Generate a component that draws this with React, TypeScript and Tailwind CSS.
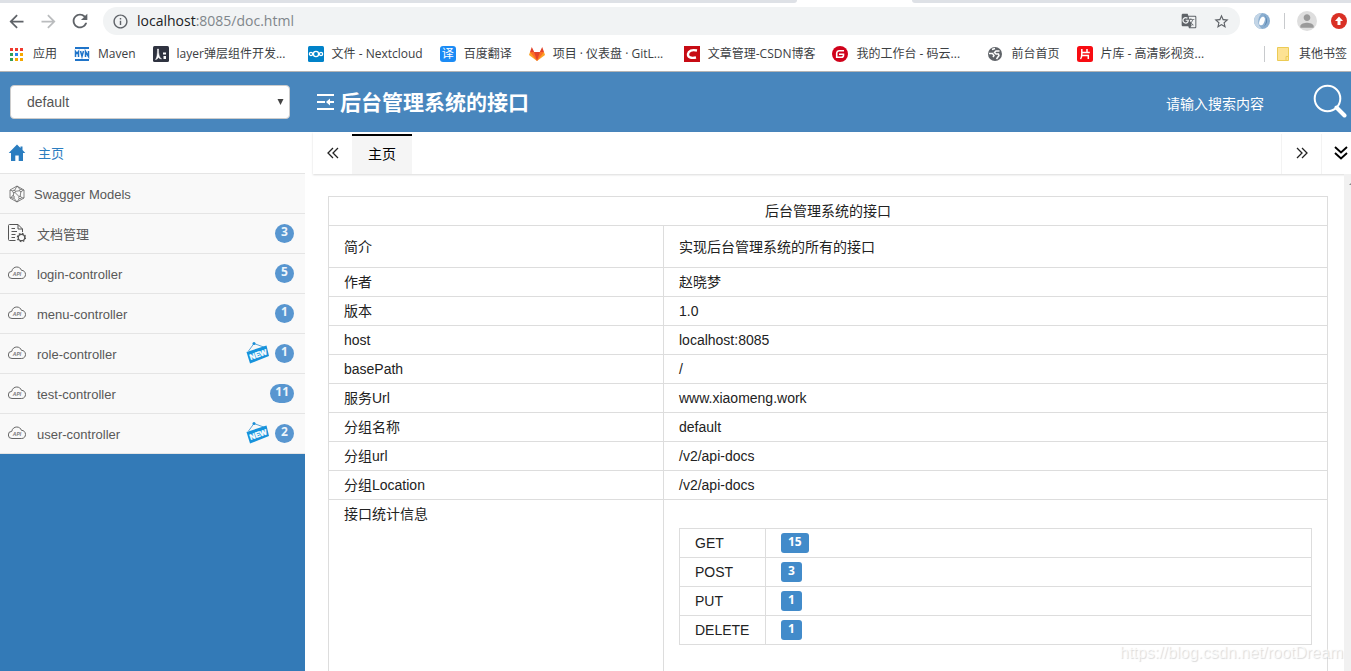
import React from 'react';
import {
  MdArrowBack,
  MdArrowForward,
  MdGTranslate,
  MdInfoOutline,
  MdPerson,
  MdRefresh,
  MdStarOutline,
} from 'react-icons/md';

const UI_FONT = "font-['Open_Sans','Noto_Sans_CJK_SC',sans-serif]";
const PAGE_FONT = "font-['Liberation_Sans','Noto_Sans_CJK_SC',sans-serif]";

/* ---------- bookmark icons ---------- */

const AppsIcon = () => {
  const colors = ['#f03a2e', '#f03a2e', '#f03a2e', '#2f9e5b', '#2a84f0', '#f5a800', '#2f9e5b', '#f5a800', '#f5a800'];
  return (
    <svg width="13" height="13" viewBox="0 0 13 13">
      {colors.map((fill, i) => (
        <rect key={i} x={(i % 3) * 5} y={Math.floor(i / 3) * 5} width="3" height="3" fill={fill} />
      ))}
    </svg>
  );
};

const MavenIcon = () => (
  <svg width="16" height="16" viewBox="0 0 16 16">
    <path d="M1 2h14M1 14h14" stroke="#1f74c9" strokeWidth="2" />
    <path d="M1.500 11V5.500l1.500 2 1.500-2V11M6.500 5l1.500 5.500L9.500 5M11.500 11V5.500l3 5V5" stroke="#1f74c9" strokeWidth="1.500" fill="none" />
  </svg>
);

const LayerIcon = () => (
  <svg width="16" height="16" viewBox="0 0 16 16">
    <rect width="16" height="16" rx="1.500" fill="#2f3340" />
    <path d="M2.500 13.500C4 12 4.500 8 4.500 3h1c0 5 .5 8 3 10-1.500-.5-2.500-.5-3-2-.5 1.500-1.500 2.500-3 2.500z" fill="#fff" stroke="#fff" strokeWidth=".5" />
    <path d="M10 6.500h3v2h-3zM10.500 10h2.500v3h-2.500z" fill="#fff" />
  </svg>
);

const NextcloudIcon = () => (
  <svg width="16" height="16" viewBox="0 0 16 16">
    <rect width="16" height="16" rx="1.500" fill="#0082c9" />
    <g fill="none" stroke="#fff" strokeWidth="1.300">
      <circle cx="8" cy="8" r="2.600" />
      <circle cx="3" cy="8" r="1.600" />
      <circle cx="13" cy="8" r="1.600" />
    </g>
  </svg>
);

const TranslateIcon = () => (
  <span className="flex size-4 items-center justify-center rounded-[3px] bg-[#1b8bf5] text-xs leading-4 text-white">译</span>
);

const GitlabIcon = () => (
  <svg width="16" height="16" viewBox="0 0 16 16">
    <path d="M8 15L0 9l1-3h14l1 3z" fill="#fca326" />
    <path d="M8 15L1 6h4.500zM8 15l7-9h-4.500z" fill="#fc6d26" />
    <path d="M8 15L5 6h6zM1 6l1.800-5L5.200 6zM15 6l-1.800-5L10.800 6z" fill="#e24329" />
  </svg>
);

const CsdnIcon = () => (
  <svg width="16" height="16" viewBox="0 0 16 16">
    <rect width="16" height="16" fill="#c70b14" />
    <path d="M13 4.500C8 3.500 4.500 4.500 4 8c-.4 3.500 3 4.500 8 3.500" fill="none" stroke="#fff" strokeWidth="2.400" />
  </svg>
);

const GiteeIcon = () => (
  <svg width="16" height="16" viewBox="0 0 16 16">
    <circle cx="8" cy="8" r="8" fill="#d0021b" />
    <path d="M12 4.800H7A2.500 2.500 0 0 0 4.700 7v4.300H9.500A2 2 0 0 0 11.500 9V8.200H7" fill="none" stroke="#fff" strokeWidth="1.600" />
  </svg>
);

const GlobeIcon = () => (
  <svg width="16" height="16" viewBox="0 0 16 16">
    <circle cx="8" cy="8" r="7" fill="#5f6368" />
    <path d="M12.500 5H9L7.500 6.500 9 8h2.500l.5 1.500L9.500 13M2 7.500h3.500l1.500 2-1 1.500M5 3.500l3-1" fill="none" stroke="#fff" strokeWidth="1.500" />
  </svg>
);

const PiankuIcon = () => (
  <svg width="16" height="16" viewBox="0 0 16 16">
    <rect width="16" height="16" rx="2.500" fill="#f80c12" />
    <path d="M4.800 3v5c0 3-.3 4-1.300 5M10 3v3.500M4.800 6.500h8M4.800 9.500h6.500V13" fill="none" stroke="#fff" strokeWidth="1.500" />
  </svg>
);

const FolderIcon = () => (
  <svg width="12" height="14" viewBox="0 0 12 14">
    <path d="M.5.5h11v9.500l-2 3.500h-9z" fill="#fde293" stroke="#eccb55" />
    <path d="M9 9.500h2.500v4H9z" fill="#fde293" stroke="#eccb55" />
  </svg>
);

const bookmarks = [
  { label: 'Maven', icon: <MavenIcon /> },
  { label: 'layer弹层组件开发...', icon: <LayerIcon />, long: true },
  { label: '文件 - Nextcloud', icon: <NextcloudIcon /> },
  { label: '百度翻译', icon: <TranslateIcon /> },
  { label: '项目 · 仪表盘 · GitL...', icon: <GitlabIcon />, long: true },
  { label: '文章管理-CSDN博客', icon: <CsdnIcon /> },
  { label: '我的工作台 - 码云...', icon: <GiteeIcon />, long: true },
  { label: '前台首页', icon: <GlobeIcon /> },
  { label: '片库 - 高清影视资...', icon: <PiankuIcon />, long: true },
];

const BrowserChrome: React.FC = () => (
  <div className={`shrink-0 bg-white ${UI_FONT}`}>
    {/* Bottom edge of the tab strip */}
    <div className="flex h-[3px]">
      <div className="w-[797px] rounded-br-lg bg-[#dee1e6]" />
      <div className="w-[115px]" />
      <div className="flex-1 rounded-bl-lg bg-[#dee1e6]" />
    </div>

    <div className="flex h-9 items-center text-[#5f6368]">
      <button aria-label="Back" className="flex w-8 justify-center"><MdArrowBack size={21} /></button>
      <button aria-label="Forward" className="flex w-8 justify-center text-[#babcbe]"><MdArrowForward size={21} /></button>
      <button aria-label="Reload" className="flex w-8 justify-center"><MdRefresh size={22} /></button>
      <div className="ml-[7px] flex h-7 flex-1 items-center rounded-full bg-[#f1f3f4] pl-[9px] pr-2.5">
        <MdInfoOutline size={17} />
        <div className="ml-2 flex-1 text-sm leading-5 text-[#80868b]">
          <span className="text-[#202124]">localhost</span>:8085/doc.html
        </div>
        <button aria-label="Translate" className="mr-4"><MdGTranslate size={16} /></button>
        <button aria-label="Bookmark"><MdStarOutline size={17} /></button>
      </div>
      <div className="flex items-center pl-3.5 pr-1">
        <svg width="16" height="16" viewBox="0 0 16 16">
          <circle cx="8" cy="8" r="8" fill="#8aaed0" />
          <path d="M8 0a8 8 0 0 0 0 16c-5-4-5-11 0-16z" fill="#c3d5e6" />
          <path d="M10 2a8 8 0 0 1-1 12 7 7 0 0 0 1-12z" fill="#4d7ba9" />
          <ellipse cx="8" cy="8" rx="2.500" ry="4.500" fill="#fff" transform="rotate(20 8 8)" />
        </svg>
        <div className="mx-3 ml-3.5 h-4 w-px bg-[#c8cacd]" />
        <div className="flex size-5 items-center justify-center rounded-full bg-[#dedede] text-[#9a9a9a]"><MdPerson size={20} /></div>
        <svg className="ml-3.5" width="16" height="16" viewBox="0 0 16 16">
          <circle cx="8" cy="8" r="8" fill="#d93025" />
          <path d="M8 3.500L12 8H9.500v4h-3V8H4z" fill="#fff" />
        </svg>
      </div>
    </div>

    <nav className="flex h-[33px] items-center gap-[17px] border-b border-[#b4b4b4] pb-0.5 pl-2.5 pr-1 text-xs leading-4 text-[#3c4043]">
      <a href="#apps" className="flex items-center gap-2.5 whitespace-nowrap"><AppsIcon />应用</a>
      {bookmarks.map((b) => (
        <a key={b.label} href="#bookmark" className="flex shrink-0 items-center gap-2 whitespace-nowrap">
          {b.icon}
          <span className={b.long ? 'w-[114px]' : ''}>{b.label}</span>
        </a>
      ))}
      <a href="#others" className="ml-auto flex shrink-0 items-center gap-2.5 whitespace-nowrap border-l border-[#c8cacd] pl-3">
        <FolderIcon />其他书签
      </a>
    </nav>
  </div>
);

/* ---------- sidebar ---------- */

const HomeIcon = () => (
  <svg width="18" height="18" viewBox="0 0 18 18">
    <path d="M9 0.500L0.700 9H3v8h4.300v-5.500h3.400V17H15V9h2.300l-2.800-3V2.500h-2v1.500z" fill="#2a7dc0" />
  </svg>
);

const ModelIcon = () => (
  <svg width="18" height="18" viewBox="0 0 18 18" fill="none" stroke="#666" strokeWidth=".8">
    <path d="M9 1l7 4v8l-7 4-7-4V5z" />
    <path d="M9 1L6 6.500 2 5M6 6.500l7-1L9 1M13 5.500L16 5M6 6.500L5 12l-3 1M5 12l4 5 3-4.500 4 .5M13 5.500l-1 7L6 6.500" />
    <g fill="#fff">
      <circle cx="6" cy="6.500" r="1.300" />
      <circle cx="13" cy="5.500" r="1.300" />
      <circle cx="5" cy="12" r="1.300" />
      <circle cx="12" cy="12.500" r="1.300" />
    </g>
  </svg>
);

const DocIcon = () => (
  <svg width="18" height="22" viewBox="0 0 18 22" fill="none" stroke="#555">
    <path d="M7.500 17.500H1.500a1 1 0 0 1-1-1v-14a1 1 0 0 1 1-1H10l4.500 4.500v3M10 1.500V6h4.500M3.500 5.500H7M3.500 8.500H9M3.500 11.500h4M3.500 14.500H7" />
    <circle cx="13.500" cy="14.500" r="4" strokeWidth="1.400" strokeDasharray="1.600 1.540" />
    <circle cx="13.500" cy="14.500" r="3.200" strokeWidth="1.200" />
  </svg>
);

const ApiIcon = () => (
  <svg width="18" height="18" viewBox="0 0 18 18">
    <path d="M4 13.500A3.500 3.500 0 0 1 3.800 6.300C4.200 3.500 6.500 2 8.800 2c2.200 0 4 1.300 4.600 3.300 2.300 0 4.100 1.700 4.100 4.100 0 2.300-1.500 4.100-3.800 4.100z" fill="none" stroke="#666" strokeWidth="1" />
    <text x="9" y="10.500" textAnchor="middle" fontSize="5" fontStyle="italic" fontWeight="bold" fill="#777">API</text>
  </svg>
);

const NewIcon = () => (
  <svg width="24" height="24" viewBox="0 0 24 24">
    <path d="M2.500 9L8 1.500l11 4" fill="none" stroke="#4a9bd4" strokeWidth=".9" />
    <circle cx="8" cy="1.500" r="1.500" fill="#1b8fd8" />
    <path d="M.5 10L20.500 3.500l2.500 10.500-19 7.500z" fill="#1793dc" />
    <text x="12.200" y="15.200" textAnchor="middle" fontSize="7.500" fontWeight="bold" fill="#fff" stroke="#fff" strokeWidth=".4" transform="rotate(-20 12 12.500)">NEW</text>
  </svg>
);

type MenuItem = { label: string; icon: React.ReactNode; count?: number; isNew?: boolean };

const menu: MenuItem[] = [
  { label: 'Swagger Models', icon: <ModelIcon /> },
  { label: '文档管理', icon: <DocIcon />, count: 3 },
  { label: 'login-controller', icon: <ApiIcon />, count: 5 },
  { label: 'menu-controller', icon: <ApiIcon />, count: 1 },
  { label: 'role-controller', icon: <ApiIcon />, count: 1, isNew: true },
  { label: 'test-controller', icon: <ApiIcon />, count: 11 },
  { label: 'user-controller', icon: <ApiIcon />, count: 2, isNew: true },
];

const Sidebar: React.FC = () => (
  <aside className="w-[305px] shrink-0 bg-[#337ab7] text-[13px] leading-5">
    <ul>
      <li className="border-b border-[#e5e5e5] bg-white">
        <a href="#home" className="flex h-[41px] items-center pl-2 text-[#2a7dc0]">
          <HomeIcon />
          <span className="ml-3 pt-0.5">主页</span>
        </a>
      </li>
      {menu.map((item, i) => (
        <li key={item.label} className="border-b border-[#e5e5e5] bg-[#f9f9f9]">
          <a href="#item" className="flex h-[39px] items-center pl-2 pr-[11px] text-[#585858]">
            {item.icon}
            <span className={i === 0 ? 'ml-2 pt-0.5' : 'ml-[11px] pt-0.5'}>{item.label}</span>
            <span className="ml-auto flex items-center gap-[5px]">
              {item.isNew && <NewIcon />}
              {item.count && (
                <span className="h-[19px] min-w-[19px] rounded-full bg-[#5896d0] px-[5px] text-center font-['Open_Sans'] text-xs font-bold leading-4 text-[#eef5fb]">
                  {item.count}
                </span>
              )}
            </span>
          </a>
        </li>
      ))}
    </ul>
  </aside>
);

/* ---------- header ---------- */

const Header: React.FC = () => (
  <header className="flex h-[60px] shrink-0 items-center bg-[#4886bd] pl-2.5 pr-1 text-white">
    <div className="relative w-[280px]">
      <select aria-label="分组" className="h-[34px] w-full appearance-none rounded border border-[#ccc] bg-white pl-4 text-sm text-[#555]">
        <option>default</option>
      </select>
      <svg className="pointer-events-none absolute right-1.5 top-3.5" width="7" height="7" viewBox="0 0 7 7">
        <path d="M0.500 0h6L3.500 6z" fill="#444" />
      </svg>
    </div>
    <svg className="ml-[26px]" width="19" height="18" viewBox="0 0 19 18" fill="none" stroke="#fff" strokeWidth="2">
      <path d="M1 2h17M1 9h8M1 16h17M11 9h7" />
      <path d="M14 5.500v7L10 9z" fill="#fff" stroke="none" />
    </svg>
    <h1 className="ml-[5px] pt-0.5 text-[21px] font-bold leading-8">后台管理系统的接口</h1>
    <input
      aria-label="搜索"
      placeholder="请输入搜索内容"
      className="ml-auto mt-1 w-[147px] bg-transparent text-sm leading-5 text-white outline-none placeholder:text-white"
    />
    <button aria-label="搜索" className="pb-0.5">
      <svg width="34" height="34" viewBox="0 0 34 34" fill="none" stroke="#fff">
        <circle cx="14.500" cy="14.500" r="12.800" strokeWidth="2" />
        <path d="M23.500 23.500l8 8" strokeWidth="4" strokeLinecap="round" />
      </svg>
    </button>
  </header>
);

/* ---------- content ---------- */

const TabBar: React.FC = () => (
  <div className="flex h-[42px] shrink-0 items-stretch pt-0.5 shadow-[0_1px_2px_rgba(0,0,0,0.15)]">
    <button aria-label="向左" className="flex w-[39px] items-center justify-center pb-0.5">
      <svg width="12" height="12" viewBox="0 0 12 12" fill="none" stroke="#222" strokeWidth="1.300">
        <path d="M6 1L1 6l5 5M11 1L6 6l5 5" />
      </svg>
    </button>
    <button className="border-t-2 border-black bg-[#f5f5f5] px-4 pb-0.5 text-sm text-black">主页</button>
    <button aria-label="向右" className="ml-auto flex w-10 items-center justify-center border-l border-[#f3f3f3] pb-0.5">
      <svg width="12" height="12" viewBox="0 0 12 12" fill="none" stroke="#222" strokeWidth="1.300">
        <path d="M1 1l5 5-5 5M6 1l5 5-5 5" />
      </svg>
    </button>
    <button aria-label="更多" className="flex w-[30px] items-center justify-end border-l border-[#f3f3f3] pb-0.5 pr-[3px]">
      <svg width="14" height="14" viewBox="0 0 14 14" fill="none" stroke="#000" strokeWidth="1.900">
        <path d="M1 1l6 5.500L13 1M1 7l6 5.500L13 7" />
      </svg>
    </button>
  </div>
);

const info = [
  ['作者', '赵晓梦'],
  ['版本', '1.0'],
  ['host', 'localhost:8085'],
  ['basePath', '/'],
  ['服务Url', 'www.xiaomeng.work'],
  ['分组名称', 'default'],
  ['分组url', '/v2/api-docs'],
  ['分组Location', '/v2/api-docs'],
];

const stats = [
  ['GET', 15],
  ['POST', 3],
  ['PUT', 1],
  ['DELETE', 1],
];

const cell = 'border border-[#ddd] px-[15px] py-1';

const DocTable: React.FC = () => (
  <table className="w-full border-collapse text-sm leading-5 text-[#222]">
    <thead>
      <tr>
        <th colSpan={2} className={`${cell} text-center font-normal`}>后台管理系统的接口</th>
      </tr>
    </thead>
    <tbody>
      <tr className="h-[42px]">
        <td className={`${cell} w-[335px]`}>简介</td>
        <td className={cell}>实现后台管理系统的所有的接口</td>
      </tr>
      {info.map(([name, value]) => (
        <tr key={name}>
          <td className={cell}>{name}</td>
          <td className={cell}>{value}</td>
        </tr>
      ))}
      <tr>
        <td className={`${cell} align-top`}>接口统计信息</td>
        <td className={`${cell} align-top`}>
          <table className="mb-6 mt-6 w-full border-collapse">
            <tbody>
              {stats.map(([method, count]) => (
                <tr key={method}>
                  <td className={`${cell} w-[86px]`}>{method}</td>
                  <td className={cell}>
                    <span className="block h-5 w-fit rounded-[3px] bg-[#428bca] px-[7px] font-['Open_Sans'] text-xs font-bold leading-[18px] text-white">
                      {count}
                    </span>
                  </td>
                </tr>
              ))}
            </tbody>
          </table>
        </td>
      </tr>
    </tbody>
  </table>
);

const App: React.FC = () => (
  <div className={`relative flex h-screen flex-col overflow-hidden bg-white ${PAGE_FONT}`}>
    <BrowserChrome />
    <Header />
    <div className="flex min-h-0 flex-1">
      <Sidebar />
      <main className="ml-2 flex min-w-0 flex-1 flex-col">
        <TabBar />
        <div className="flex min-h-0 flex-1 overflow-hidden">
          <div className="flex-1 pl-[15px] pr-4 pt-[22px]">
            <DocTable />
          </div>
          {/* Scrollbar track, partly off the edge */}
          <div className="flex w-[7px] justify-end bg-[#f1f1f1] pt-2">
            <svg width="2" height="3" viewBox="0 0 2 3"><path d="M0 3l2-2v2z" fill="#888" /></svg>
          </div>
        </div>
      </main>
    </div>
    <div className="pointer-events-none absolute bottom-2 right-2 text-base leading-5 text-white/70 [text-shadow:1px_1px_1px_rgba(0,0,0,0.15)]">
      https://blog.csdn.net/rootDream
    </div>
  </div>
);

export default App;
